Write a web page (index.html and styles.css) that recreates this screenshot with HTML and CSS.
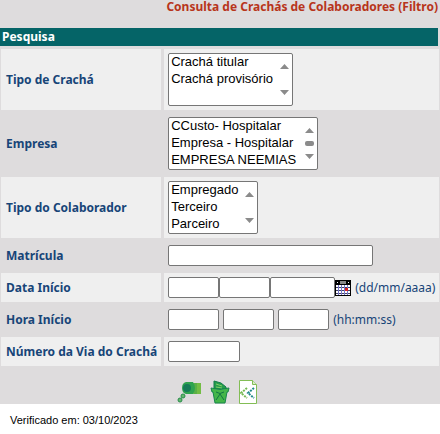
FILE: index.html
```html
<!DOCTYPE html>
<html lang="pt-BR">

<head>
    <meta charset="UTF-8">
    <meta name="viewport" content="width=device-width, initial-scale=1.0">
    <title>Consulta de Crachás</title>
    <link rel="stylesheet" href="styles.css">
</head>

<body>
    <form id="filtro">
        <h1>Consulta de Crachás de Colaboradores (Filtro)</h1>
        <h2>Pesquisa</h2>
        <table>
            <tr class="claro">
                <th><label for="tipoCracha">Tipo de Crachá</label></th>
                <td>
                    <div class="lista">
                        <select id="tipoCracha" class="lista-media" size="3" multiple>
                            <option>Crachá titular</option>
                            <option>Crachá provisório</option>
                        </select>
                        <svg class="barra" viewBox="0 0 15 51"><path d="M3 15l4.500-5 4.500 5zM3 36l4.500 5 4.500-5z"/></svg>
                    </div>
                </td>
            </tr>
            <tr>
                <th><label for="empresa">Empresa</label></th>
                <td>
                    <div class="lista">
                        <select id="empresa" class="lista-grande" size="3" multiple>
                            <option>CCusto- Hospitalar</option>
                            <option>Empresa - Hospitalar</option>
                            <option>EMPRESA NEEMIAS</option>
                        </select>
                        <svg class="barra" viewBox="0 0 15 51"><path d="M3 15l4.500-5 4.500 5zM3 36l4.500 5 4.500-5z"/><rect x="3" y="23" width="9" height="5" rx="2"/></svg>
                    </div>
                </td>
            </tr>
            <tr class="claro">
                <th><label for="tipoColaborador">Tipo do Colaborador</label></th>
                <td>
                    <div class="lista">
                        <select id="tipoColaborador" class="lista-pequena" size="3" multiple>
                            <option>Empregado</option>
                            <option>Terceiro</option>
                            <option>Parceiro</option>
                        </select>
                        <svg class="barra" viewBox="0 0 15 51"><path d="M3 15l4.500-5 4.500 5zM3 36l4.500 5 4.500-5z"/></svg>
                    </div>
                </td>
            </tr>
            <tr>
                <th><label for="matricula">Matrícula</label></th>
                <td><input type="text" id="matricula" class="campo-longo"></td>
            </tr>
            <tr class="claro">
                <th><label for="dia">Data Início</label></th>
                <td>
                    <div class="linha">
                        <input type="text" id="dia" class="campo-curto" maxlength="2">
                        <input type="text" class="campo-curto" maxlength="2" aria-label="Mês">
                        <input type="text" class="campo-ano" maxlength="4" aria-label="Ano">
                        <button type="button" class="calendario" aria-label="Calendário">
                            <svg viewBox="0 0 16 16" width="16" height="16" shape-rendering="crispEdges">
                                <path d="M0 0h16v16H0z"/>
                                <path fill="#888" d="M5 1h6v3H5z"/>
                                <path fill="#fff" d="M2 2h1v1H2zM13 2h1v1h-1zM1 5h14v10H1z"/>
                                <path fill="#446" d="M1 7h14v1H1zM1 10h14v1H1zM1 13h14v1H1z"/>
                                <path fill="#77c" d="M3 5h1v10H3zM6 5h1v10H6zM9 5h1v10H9zM12 5h1v10h-1z"/>
                                <path fill="#d22" d="M10 8h3v3h-3z"/>
                            </svg>
                        </button>
                        <span class="formato">(dd/mm/aaaa)</span>
                    </div>
                </td>
            </tr>
            <tr>
                <th><label for="hora">Hora Início</label></th>
                <td>
                    <div class="linha linha-hora">
                        <input type="text" id="hora" class="campo-curto" maxlength="2">
                        <input type="text" class="campo-curto" maxlength="2" aria-label="Minuto">
                        <input type="text" class="campo-curto" maxlength="2" aria-label="Segundo">
                        <span>(hh:mm:ss)</span>
                    </div>
                </td>
            </tr>
            <tr class="claro">
                <th><label for="via">Número da Via do Crachá</label></th>
                <td><input type="text" id="via" class="campo-medio"></td>
            </tr>
        </table>

        <div class="acoes">
            <button type="submit" aria-label="Pesquisar">
                <svg viewBox="0 0 25 24" width="25" height="24">
                    <path fill="#73bd44" d="M12 3h12v11H12z"/>
                    <path fill="#5bb046" d="M17 3h3v11h-3z"/>
                    <path fill="#2fa34f" d="M9 2h7q2 3 2 6t-2 6H9q-4-1-4-6t4-6z"/>
                    <circle cx="10" cy="8" r="4" fill="#167b57"/>
                    <circle cx="6" cy="16" r="2" fill="#65b86c" stroke="#278b4b"/>
                    <circle cx="3" cy="20" r="2" fill="#65b86c" stroke="#278b4b"/>
                </svg>
            </button>
            <button type="reset" aria-label="Limpar">
                <svg viewBox="0 0 20 24" width="20" height="24">
                    <path fill="#269c4b" stroke="#117c48" d="M4 9V1l7 2 5 4v2z"/>
                    <path stroke="#83cf65" d="M6 4l6 2M6 7l6 1"/>
                    <path fill="#43b649" stroke="#16854c" stroke-linejoin="round" d="M1 8q9 3 18 0l-1 4h-1l-2 11H5L3 12H2z"/>
                    <path fill="none" stroke="#117544" d="M6 12q4 3 8 0M6 20l4-6 4 6"/>
                </svg>
            </button>
            <button type="button" aria-label="Compartilhar">
                <svg viewBox="0 0 20 24" width="20" height="24">
                    <path fill="#fff" stroke="#83bd55" d="M1.500 .5h13l4 4v19h-17z"/>
                    <path fill="#d9edc8" stroke="#83bd55" d="M14.500 .5v4h4"/>
                    <path fill="none" stroke="#76b952" stroke-width="2" stroke-dasharray="2 1" d="M9 8l-6 5 6 5"/>
                    <path fill="none" stroke="#20898a" stroke-width="2" stroke-dasharray="2 1" d="M16 8l-6 5 6 5"/>
                </svg>
            </button>
        </div>
    </form>

    <p id="verificado">Verificado em: 03/10/2023</p>
</body>

</html>
```

FILE: styles.css
```css
body {
  margin: 0;
  background-color: white;
  color: #174578;
  font-family: Tahoma, "Noto Sans", sans-serif;
  font-size: 12px;
}

#filtro {
  background-color: #dedcdd;
  overflow: hidden;
}

h1 {
  margin: 0 2px 0 0;
  height: 28px;
  color: #b8351b;
  font-size: 12px;
  line-height: 14px;
  text-align: right;
  white-space: nowrap;
}

h2 {
  margin: 0 2px 0 0;
  padding-left: 2px;
  background-color: #056467;
  color: white;
  font-size: 12px;
  line-height: 18px;
}

/* the outer spacing hangs over the left edge */
table {
  width: calc(100% + 2px);
  margin-left: -2px;
  border-spacing: 3px;
}

th,
td {
  padding: 4px;
}

th {
  width: 153px;
  padding-left: 5px;
  text-align: left;
  white-space: nowrap;
}

.claro th,
.claro td {
  background-color: #efefef;
}

input,
select {
  display: block;
  box-sizing: border-box;
  margin: 0;
  border: 1px solid #767676;
  border-radius: 2px;
  background-color: white;
  color: black;
  font-family: "Liberation Sans", Arial, sans-serif;
  font-size: 13px;
}

input {
  height: 21px;
  padding: 1px 2px;
}

.lista {
  position: relative;
  width: fit-content;
}

select {
  height: 53px;
  padding: 0;
  overflow-y: scroll;
  scrollbar-width: none;
}

option {
  min-height: 17px;
  padding: 0 2px;
  line-height: 17px;
}

.barra {
  position: absolute;
  top: 1px;
  right: 1px;
  width: 15px;
  height: 51px;
  fill: #8b8b8b;
  pointer-events: none;
}

.lista-pequena {
  width: 90px;
}

.lista-media {
  width: 125px;
}

.lista-grande {
  width: 150px;
}

.campo-curto {
  width: 51px;
}

.campo-ano {
  width: 65px;
}

.campo-medio {
  width: 72px;
}

.campo-longo {
  width: 205px;
}

.linha {
  display: flex;
  align-items: center;
  height: 21px;
  line-height: 16px;
  white-space: nowrap;
}

.linha-hora {
  gap: 4px;
}

.formato {
  margin-left: 4px;
}

button {
  display: block;
  padding: 0;
  border: 0;
  background: none;
  cursor: pointer;
}

button svg {
  display: block;
}

.acoes {
  display: flex;
  justify-content: center;
  gap: 8px;
  padding: 11px 6px 0 0;
}

#verificado {
  margin: 10px;
  color: black;
  font-family: "Liberation Sans", Arial, sans-serif;
  font-size: 11px;
  line-height: 12px;
}
```
